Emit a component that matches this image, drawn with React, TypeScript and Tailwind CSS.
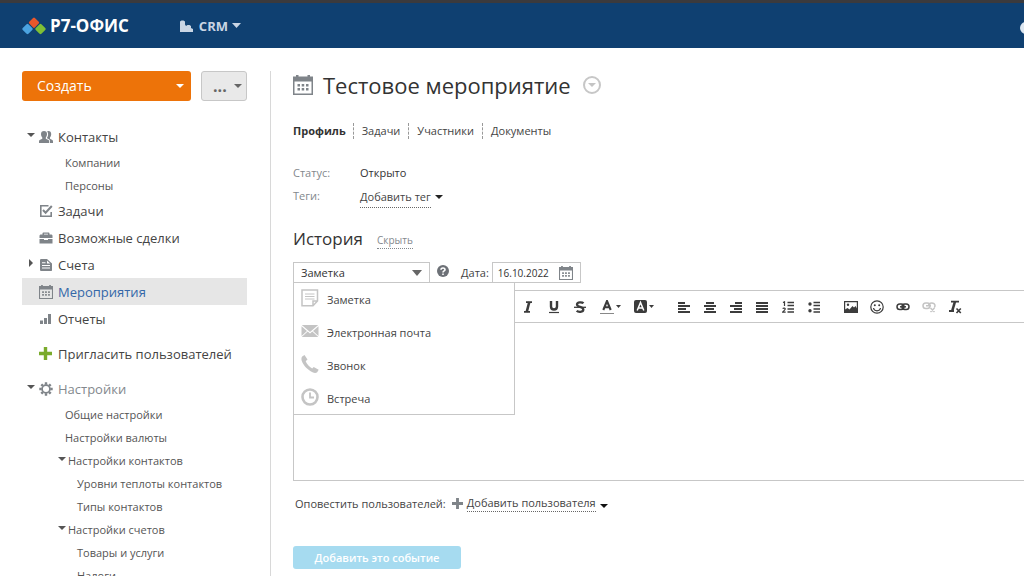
import type { ReactNode } from 'react';

type IconProps = { className?: string };

function CaretDown({ className = 'w-2 h-1' }: IconProps) {
  return (
    <svg viewBox="0 0 8 4" preserveAspectRatio="none" className={`shrink-0 ${className}`} fill="currentColor" aria-hidden="true">
      <path d="M0 0h8L4 4z" />
    </svg>
  );
}

function CaretRight({ className = 'w-1 h-2' }: IconProps) {
  return (
    <svg viewBox="0 0 4 8" className={`shrink-0 ${className}`} fill="currentColor" aria-hidden="true">
      <path d="M0 0v8l4-4z" />
    </svg>
  );
}

function CalendarIcon({ className = '' }: IconProps) {
  return (
    <svg viewBox="0 0 20 20" className={className} fill="currentColor" aria-hidden="true">
      <path fillRule="evenodd" d="M0 1.500h3V0h2.500v1.500h9V0H17v1.500h3V20H0zM1.500 6.500v12h17v-12z" />
      <path d="M4.500 9h2.500v2.500H4.500zM8.700 9h2.500v2.500H8.700zM13 9h2.500v2.500H13zM4.500 13h2.500v2.500H4.500zM8.700 13h2.500v2.500H8.700zM13 13h2.500v2.500H13z" />
    </svg>
  );
}

function PeopleIcon({ className = '' }: IconProps) {
  return (
    <svg viewBox="0 0 14 12" className={className} fill="currentColor" aria-hidden="true">
      <path d="M5 0c2 0 3 1.200 3 3 0 1.500-.5 2.700-1.200 3.400v1.300l2.700 1.300c.5.300.7.800.7 1.500V12H0v-1.500c0-.7.2-1.200.7-1.500l2.600-1.300V6.400C2.500 5.700 2 4.500 2 3c0-1.800 1-3 3-3z" />
      <path d="M8.200.4C8.500.1 9 0 9.500 0c1.700 0 2.700 1.200 2.700 3 0 1.500-.5 2.700-1.200 3.400v1.300l2.300 1.300c.5.300.7.800.7 1.500V12h-3v-2c0-.8-.3-1.400-1-1.700L8 7.200v-.4C8.700 6 9.100 4.600 9.100 3c0-1-.3-1.900-.9-2.600z" />
    </svg>
  );
}

function TaskIcon({ className = '' }: IconProps) {
  return (
    <svg viewBox="0 0 14 14" className={className} fill="none" stroke="currentColor" aria-hidden="true">
      <path strokeWidth="1.600" d="M9.500 1.800H1.800v10.400h10.400V8" />
      <path strokeWidth="2" d="M4 6l2.600 2.700L12.800 2" />
    </svg>
  );
}

function CaseIcon({ className = '' }: IconProps) {
  return (
    <svg viewBox="0 0 14 12" className={className} fill="currentColor" aria-hidden="true">
      <path fillRule="evenodd" d="M3.500 2.500V1.500C3.500.7 4 .5 4.700.5h4.600c.7 0 1.200.2 1.200 1v1H12c1 0 1.500.5 1.500 1.500V6H.5V4c0-1 .5-1.500 1.500-1.500zM5 2.500h4v-.8H5z" />
      <path d="M.5 7H5v1h4V7h4.500v4.500H.5z" />
    </svg>
  );
}

function InvoiceIcon({ className = '' }: IconProps) {
  return (
    <svg viewBox="0 0 14 14" className={className} fill="currentColor" aria-hidden="true">
      <path fillRule="evenodd" d="M2.500 1H8l5 4.500V12c0 .7-.3 1-1 1H2.500c-.7 0-1.500-.3-1.500-1V2c0-.7.8-1 1.500-1zM3 4.200v1h3.500v-1zm0 2.700v1h8v-1zm0 2.700v1h8v-1zM8 2.500V5.500h3.200z" />
    </svg>
  );
}

function ReportIcon({ className = '' }: IconProps) {
  return (
    <svg viewBox="0 0 14 12" className={className} fill="currentColor" aria-hidden="true">
      <path d="M1 7.500h3V11H1zM5 5h3v6H5zM9 1h3v10H9z" />
    </svg>
  );
}

function PlusIcon({ className = '' }: IconProps) {
  return (
    <svg viewBox="0 0 13 13" className={className} fill="currentColor" aria-hidden="true">
      <path d="M4.800 0h3.400v4.800H13v3.400H8.200V13H4.800V8.200H0V4.800h4.800z" />
    </svg>
  );
}

function GearIcon({ className = '' }: IconProps) {
  return (
    <svg viewBox="0 0 14 14" className={className} fill="none" stroke="currentColor" aria-hidden="true">
      <circle cx="7" cy="7" r="3.900" strokeWidth="1.700" />
      <path strokeWidth="2.400" d="M7 .3v2.500M7 11.200v2.500M.3 7h2.500M11.200 7h2.500M2.300 2.300l1.600 1.600M10.100 10.100l1.600 1.600M2.300 11.700l1.600-1.600M10.100 3.900l1.600-1.600" />
    </svg>
  );
}

function Logo() {
  return (
    <svg viewBox="0 0 24 18" className="w-6 h-[18px] shrink-0" aria-hidden="true">
      <rect x="-4" y="-4" width="8" height="8" rx="1.300" fill="#e9572b" transform="translate(12 5.700) rotate(45)" />
      <rect x="-4" y="-4" width="8" height="8" rx="1.300" fill="#4ba3e0" transform="translate(5.500 12) rotate(45)" />
      <rect x="-4" y="-4" width="8" height="8" rx="1.300" fill="#7fbf35" transform="translate(18.500 12) rotate(45)" />
    </svg>
  );
}

function Header() {
  return (
    <header className="h-12 shrink-0 bg-[#0f4071] border-t-3 border-[#3b3a3d] pl-[22px] flex items-center overflow-hidden">
      <a href="#" className="flex items-center gap-1 text-white text-[17px] leading-6 font-bold">
        <Logo />
        Р7-ОФИС
      </a>
      <button type="button" className="ml-[51px] flex items-center text-[13px] leading-5 font-bold text-[#c9d5e4]">
        <svg viewBox="0 0 13 12" className="w-[13px] h-3 mr-[6px]" fill="currentColor" aria-hidden="true">
          <path d="M0 1.500L1.500.5h2L5 1.500v3L6 6l1.500-1h2L11 6v2l2 1v3H0z" />
        </svg>
        CRM
        <CaretDown className="w-[9px] h-[5px] ml-1" />
      </button>
      <button type="button" aria-label="Профиль пользователя" className="ml-auto -mr-2 mt-1 size-3 shrink-0 rounded-full bg-[#dce6f0]" />
    </header>
  );
}

type NavItemProps = {
  label: string;
  icon: ReactNode;
  caret?: 'down' | 'right';
  active?: boolean;
  muted?: boolean;
};

function NavItem({ label, icon, caret, active, muted }: NavItemProps) {
  const color = active ? 'bg-[#e6e6e6] text-[#3468a8]' : muted ? 'text-[#83888d]' : 'text-[#444]';
  return (
    <a href="#" className={`flex items-center h-[27px] text-[13px] leading-5 ${color}`}>
      <span className="w-[17px] pl-[5px] pr-1 -mt-1 flex justify-center text-[#555]">
        {caret === 'down' && <CaretDown />}
        {caret === 'right' && <CaretRight />}
      </span>
      <span className="w-[19px] flex items-center text-[#7f8489]">{icon}</span>
      {label}
    </a>
  );
}

function SubItem({ label, level = 1 }: { label: string; level?: 1 | 2 }) {
  return (
    <a href="#" className={`flex items-center h-[23px] text-[11px] leading-4 text-[#555] ${level === 2 ? 'pl-[55px]' : 'pl-[43px]'}`}>
      {label}
    </a>
  );
}

function SubGroup({ label }: { label: string }) {
  return (
    <a href="#" className="flex items-center gap-[2px] h-[23px] pl-9 text-[11px] leading-4 text-[#555]">
      <CaretDown className="w-2 h-1 -mt-1" />
      {label}
    </a>
  );
}

function Sidebar() {
  return (
    <aside className="w-[225px] shrink-0">
      <div className="flex gap-[10px]">
        <button type="button" className="flex-1 h-[30px] pl-[15px] pr-[7px] flex items-center justify-between rounded-[3px] bg-[#ed7309] text-sm leading-5 text-white">
          Создать
          <CaretDown />
        </button>
        <button type="button" className="w-[46px] h-[30px] pl-[11px] pr-1 flex items-center justify-between rounded-[3px] border border-[#c7c7c7] bg-[#e9e9e9] text-base leading-5 font-bold text-[#666]">
          ...
          <CaretDown />
        </button>
      </div>
      <nav className="mt-[22px] whitespace-nowrap">
        <NavItem label="Контакты" caret="down" icon={<PeopleIcon className="w-[14px] h-3" />} />
        <div className="pt-px">
          <SubItem label="Компании" />
          <SubItem label="Персоны" />
        </div>
        <NavItem label="Задачи" icon={<TaskIcon className="size-[14px]" />} />
        <NavItem label="Возможные сделки" icon={<CaseIcon className="w-[14px] h-3" />} />
        <NavItem label="Счета" caret="right" icon={<InvoiceIcon className="size-[14px]" />} />
        <NavItem label="Мероприятия" active icon={<CalendarIcon className="size-[14px]" />} />
        <NavItem label="Отчеты" icon={<ReportIcon className="w-[14px] h-3" />} />
        <div className="mt-2">
          <NavItem label="Пригласить пользователей" icon={<PlusIcon className="size-[13px] text-[#7aab2c]" />} />
        </div>
        <div className="mt-2">
          <NavItem label="Настройки" caret="down" muted icon={<GearIcon className="size-[14px]" />} />
          <div className="pt-px">
            <SubItem label="Общие настройки" />
            <SubItem label="Настройки валюты" />
            <SubGroup label="Настройки контактов" />
            <SubItem level={2} label="Уровни теплоты контактов" />
            <SubItem level={2} label="Типы контактов" />
            <SubGroup label="Настройки счетов" />
            <SubItem level={2} label="Товары и услуги" />
            <SubItem level={2} label="Налоги" />
          </div>
        </div>
      </nav>
    </aside>
  );
}

const tabs = ['Профиль', 'Задачи', 'Участники', 'Документы'];

function Tabs() {
  return (
    <nav className="mt-6 flex text-[11px] leading-4 text-[#444]">
      {tabs.map((tab, i) => (
        <a
          key={tab}
          href="#"
          className={i === 0 ? 'pr-[7px] font-bold text-[#333]' : 'px-2 border-l border-dashed border-[#999]'}
        >
          {tab}
        </a>
      ))}
    </nav>
  );
}

const eventTypes = [
  {
    label: 'Заметка',
    icon: (
      <svg viewBox="0 0 18 18" className="size-[18px]" fill="none" stroke="currentColor" aria-hidden="true">
        <path strokeWidth="1.500" d="M1 1h15.500v11L12 16.800H1zM16.500 12H12v4.800" />
        <path d="M4 5h9.500M4 7.500h9.500M4 10h9.500" />
      </svg>
    ),
  },
  {
    label: 'Электронная почта',
    icon: (
      <svg viewBox="0 0 18 18" className="size-[18px]" fill="currentColor" aria-hidden="true">
        <path d="M.8 3h16.400L9 10zM.5 4.200L6 9 .5 14zM17.500 4.200L12 9l5.500 5zM6.700 9.600L9 11.500l2.300-1.900 6 5.400H.700z" />
      </svg>
    ),
  },
  {
    label: 'Звонок',
    icon: (
      <svg viewBox="0 0 18 18" className="size-[18px]" fill="currentColor" aria-hidden="true">
        <path d="M1.200 1.500L3.500 0l3 4.500L4.700 6.300c1 2.600 3.500 5.600 6.500 7.200l1.500-1.600 5 2.800-1.500 2.500c-1 .8-2.700 1-4.700 0C6.500 14.800 2.500 10.500.8 6c-.6-1.700-.5-3.500.4-4.500z" />
      </svg>
    ),
  },
  {
    label: 'Встреча',
    icon: (
      <svg viewBox="0 0 18 18" className="size-[18px]" fill="none" stroke="currentColor" aria-hidden="true">
        <circle cx="9" cy="9" r="7.500" strokeWidth="2.600" />
        <path strokeWidth="1.800" d="M9 4.500V9.500h4" />
      </svg>
    ),
  },
];

function TypeSelect() {
  return (
    <div className="relative w-[137px] h-[21px] grid items-center">
      <select
        aria-label="Тип события"
        defaultValue="Заметка"
        className="col-start-1 row-start-1 w-full h-[21px] pl-[7px] appearance-none border border-[#c7c7c7] bg-white text-[11px] leading-4 text-[#333]"
      >
        {eventTypes.map((t) => (
          <option key={t.label}>{t.label}</option>
        ))}
      </select>
      <svg viewBox="0 0 10 6" className="col-start-1 row-start-1 justify-self-end mr-2 w-[10px] h-[6px] pointer-events-none" fill="#666" aria-hidden="true">
        <path d="M0 0h10L5 6z" />
      </svg>
      <ul className="absolute z-10 left-0 top-5 w-[222px] h-[133px] border border-[#c7c7c7] bg-white">
        {eventTypes.map((t) => (
          <li key={t.label}>
            <button type="button" className="w-full h-[33px] pl-[7px] flex items-center gap-2 text-[11px] leading-4 text-[#444]">
              <span className="text-[#c4c4c4] -mt-[3px]">{t.icon}</span>
              {t.label}
            </button>
          </li>
        ))}
      </ul>
    </div>
  );
}

function ToolButton({ label, className = 'w-[26px]', children }: { label: string; className?: string; children: ReactNode }) {
  return (
    <button type="button" aria-label={label} className={`h-6 shrink-0 flex items-center justify-center ${className}`}>
      {children}
    </button>
  );
}

function LinesIcon({ d }: { d: string }) {
  return (
    <svg viewBox="0 0 12 12" className="size-3" fill="none" stroke="currentColor" strokeWidth="2.200" aria-hidden="true">
      <path d={d} />
    </svg>
  );
}

function Toolbar() {
  return (
    <div className="h-8 pl-[221px] flex items-center border-b border-[#c7c7c7] text-[#3c3c3c]">
      <ToolButton label="Курсив">
        <svg viewBox="0 0 12 12" className="size-3" fill="none" stroke="currentColor" aria-hidden="true">
          <path strokeWidth="1.800" d="M4 1.200h6M2 10.800h6" />
          <path strokeWidth="2.600" d="M7.300 1L4.700 11" />
        </svg>
      </ToolButton>
      <ToolButton label="Подчеркнутый">
        <svg viewBox="0 0 12 14" className="w-3 h-[14px]" fill="none" stroke="currentColor" aria-hidden="true">
          <path strokeWidth="2.400" d="M3 1v5.500c0 2 1 3 3 3s3-1 3-3V1" />
          <path strokeWidth="1.200" d="M1 12.500h10" />
        </svg>
      </ToolButton>
      <ToolButton label="Зачеркнутый">
        <svg viewBox="0 0 12 12" className="size-3" fill="none" stroke="currentColor" aria-hidden="true">
          <path strokeWidth="2.300" d="M9.500 2.200C8.500 1.200 3 .5 3 3.500c0 3 6.300 1.800 6.300 5 0 3-5.300 2.700-6.600 1.300" />
          <path strokeWidth="1.300" d="M0 6.300h12" />
        </svg>
      </ToolButton>
      <ToolButton label="Цвет текста" className="w-[34px] gap-[2px]">
        <svg viewBox="0 0 14 14" className="size-[14px]" fill="none" stroke="currentColor" aria-hidden="true">
          <path strokeWidth="2.100" d="M3.300 10L7 1l3.700 9M4.500 7.300h5" />
          <path strokeWidth="1" stroke="#888" d="M0 13.500h14" />
        </svg>
        <CaretDown className="w-[5px] h-[3px]" />
      </ToolButton>
      <ToolButton label="Цвет фона" className="w-[34px] gap-[2px]">
        <svg viewBox="0 0 13 13" className="size-[13px]" fill="none" aria-hidden="true">
          <rect width="13" height="13" rx="2" fill="#3c3c3c" />
          <path stroke="#fff" strokeWidth="1.500" d="M3.200 10.500L6.500 2.500l3.300 8M4.300 8h4.400" />
        </svg>
        <CaretDown className="w-[5px] h-[3px]" />
      </ToolButton>
      <div className="ml-[10px] flex">
        <ToolButton label="По левому краю">
          <LinesIcon d="M0 2h7M0 5h12M0 8h8M0 11h12" />
        </ToolButton>
        <ToolButton label="По центру">
          <LinesIcon d="M2 2h8M0 5h12M2 8h8M0 11h12" />
        </ToolButton>
        <ToolButton label="По правому краю">
          <LinesIcon d="M5 2h7M0 5h12M4 8h8M0 11h12" />
        </ToolButton>
        <ToolButton label="По ширине">
          <LinesIcon d="M0 2h12M0 5h12M0 8h12M0 11h12" />
        </ToolButton>
        <ToolButton label="Нумерованный список">
          <svg viewBox="0 0 12 12" className="size-3" fill="none" stroke="currentColor" aria-hidden="true">
            <path strokeWidth="1.500" d="M5.500 1.500H12M5.500 4.500H12M5.500 8H12M5.500 11H12" />
            <path strokeWidth="1.200" d="M1 1.500L2.500.8V5M.7 7.700c.7-1 2.800-.8 2.500.5-.2.900-2 2-2.500 2.900h3" />
          </svg>
        </ToolButton>
        <ToolButton label="Маркированный список">
          <svg viewBox="0 0 12 12" className="size-3" fill="none" stroke="currentColor" aria-hidden="true">
            <path strokeWidth="1.500" d="M5.500 1.500H12M5.500 4.500H12M5.500 8H12M5.500 11H12" />
            <circle cx="2" cy="3" r="1.700" fill="currentColor" stroke="none" />
            <circle cx="2" cy="9.700" r="1.700" fill="currentColor" stroke="none" />
          </svg>
        </ToolButton>
      </div>
      <div className="ml-[11px] flex">
        <ToolButton label="Изображение">
          <svg viewBox="0 0 14 12" className="w-[14px] h-3" fill="currentColor" aria-hidden="true">
            <path fillRule="evenodd" d="M0 0h14v12H0zM1.200 1.200v9.600h11.600V1.200z" />
            <path d="M1 11V8.500L3.500 7l2 1.500 3-3.500 1.500 1.500L11.500 5 13 7.500V11z" />
            <circle cx="4" cy="3.700" r="1.200" />
          </svg>
        </ToolButton>
        <ToolButton label="Смайлик">
          <svg viewBox="0 0 14 14" className="size-[14px]" fill="none" stroke="currentColor" aria-hidden="true">
            <circle cx="7" cy="7" r="6.200" strokeWidth="1.200" />
            <path strokeWidth="1.200" d="M3.500 8c.7 3.700 6.300 3.700 7 0" />
            <circle cx="4.800" cy="5.300" r="1" fill="currentColor" stroke="none" />
            <circle cx="9.200" cy="5.300" r="1" fill="currentColor" stroke="none" />
          </svg>
        </ToolButton>
        <ToolButton label="Ссылка">
          <svg viewBox="0 0 14 8" className="w-[14px] h-2" fill="none" stroke="currentColor" strokeWidth="1.500" aria-hidden="true">
            <rect x="1" y="1" width="7" height="5.500" rx="2.750" />
            <rect x="6" y="1" width="7" height="5.500" rx="2.750" />
            <path d="M4 3.800h6" />
          </svg>
        </ToolButton>
        <ToolButton label="Убрать ссылку">
          <svg viewBox="0 0 14 12" className="w-[14px] h-3 text-[#c4c4c4]" fill="none" stroke="currentColor" strokeWidth="1.500" aria-hidden="true">
            <rect x="1" y="2" width="7" height="5.500" rx="2.750" />
            <path d="M6.500 5c0-4 6.500-4 6.500-.3 0 .8-.3 1.400-.8 1.800M4 4.800h5M8.500 7l4 4M12.500 7l-4 4" />
          </svg>
        </ToolButton>
        <ToolButton label="Убрать форматирование">
          <svg viewBox="0 0 14 14" className="size-[14px]" fill="none" stroke="currentColor" aria-hidden="true">
            <path strokeWidth="1.800" d="M3 1.700h8M1 11h5" />
            <path strokeWidth="2.600" d="M7 1.500L4.200 11" />
            <path strokeWidth="1.600" d="M8.500 8.500l4.300 4.500M12.800 8.500L8.500 13" />
          </svg>
        </ToolButton>
      </div>
    </div>
  );
}

function EventPage() {
  return (
    <main className="flex-1 min-w-0 pl-[22px]">
      <div className="flex items-center h-7">
        <CalendarIcon className="size-5 text-[#7f8489]" />
        <h1 className="ml-[10px] text-[22px] leading-7 text-[#333]">Тестовое мероприятие</h1>
        <button type="button" aria-label="Действия" className="ml-3 size-[18px] flex items-center justify-center rounded-full border-2 border-[#c7c7c7] text-[#c4c4c4]">
          <CaretDown />
        </button>
      </div>
      <Tabs />
      <dl className="mt-[26px] grid grid-cols-[67px_1fr] text-[11px] leading-4 text-[#333]">
        <dt className="text-[#83888d]">Статус:</dt>
        <dd>Открыто</dd>
        <dt className="mt-[7px] text-[#83888d]">Теги:</dt>
        <dd className="mt-2">
          <button type="button" className="flex items-start gap-1 text-[#444]">
            <span className="h-[19px] border-b border-dotted border-[#666]">Добавить тег</span>
            <CaretDown className="w-2 h-1 mt-[6px] text-[#222]" />
          </button>
        </dd>
      </dl>
      <div className="mt-[19px] flex items-center gap-[14px] h-6">
        <h2 className="text-[17px] leading-6 text-[#333]">История</h2>
        <a href="#" className="mt-[3px] border-b border-dotted border-[#83888d] text-[10px] leading-4 text-[#83888d]">Скрыть</a>
      </div>
      <div className="mt-[11px] flex items-center h-[21px] text-[11px] leading-4 text-[#444]">
        <TypeSelect />
        <button type="button" aria-label="Справка" className="ml-[7px] mb-1">
          <svg viewBox="0 0 12 12" className="size-3" fill="none" aria-hidden="true">
            <circle cx="6" cy="6" r="6" fill="#6d7177" />
            <path stroke="#fff" strokeWidth="1.600" d="M4 4.700c0-2.300 4-2.300 4 0C8 6 6 5.800 6 7.500M6 8.500V10" />
          </svg>
        </button>
        <label htmlFor="event-date" className="ml-3">Дата:</label>
        <div className="ml-[3px] w-[89px] h-[21px] pl-[5px] pr-[7px] flex items-center border border-[#c7c7c7]">
          <input id="event-date" defaultValue="16.10.2022" className="w-full min-w-0 text-[10px] leading-4 text-[#333]" />
          <CalendarIcon className="size-[14px] shrink-0 text-[#7f8489]" />
        </div>
      </div>
      <div className="mt-[7px] border border-r-0 border-[#c7c7c7]">
        <Toolbar />
        <div role="textbox" contentEditable suppressContentEditableWarning aria-label="Текст события" className="h-[157px]" />
      </div>
      <div className="mt-[14px] pl-[2px] flex items-center text-[11px] leading-4 text-[#444]">
        Оповестить пользователей:
        <button type="button" className="ml-[6px] flex items-center">
          <PlusIcon className="size-[11px] text-[#7f8489]" />
          <span className="ml-1 border-b border-dotted border-[#666]">Добавить пользователя</span>
          <CaretDown className="w-2 h-1 ml-1 mt-1 text-[#111]" />
        </button>
      </div>
      <button type="button" className="mt-[34px] w-[168px] h-[23px] rounded-[3px] bg-[#a6dbf0] text-[11px] leading-4 font-semibold text-white">
        Добавить это событие
      </button>
    </main>
  );
}

function App() {
  return (
    <div className="h-screen flex flex-col overflow-hidden bg-white font-['Open_Sans',sans-serif]">
      <Header />
      <div className="flex-1 min-h-0 flex pt-[23px] pl-[22px]">
        <Sidebar />
        <div className="ml-[23px] w-px shrink-0 bg-[#d8d8d8]" />
        <EventPage />
      </div>
    </div>
  );
}

export default App;
